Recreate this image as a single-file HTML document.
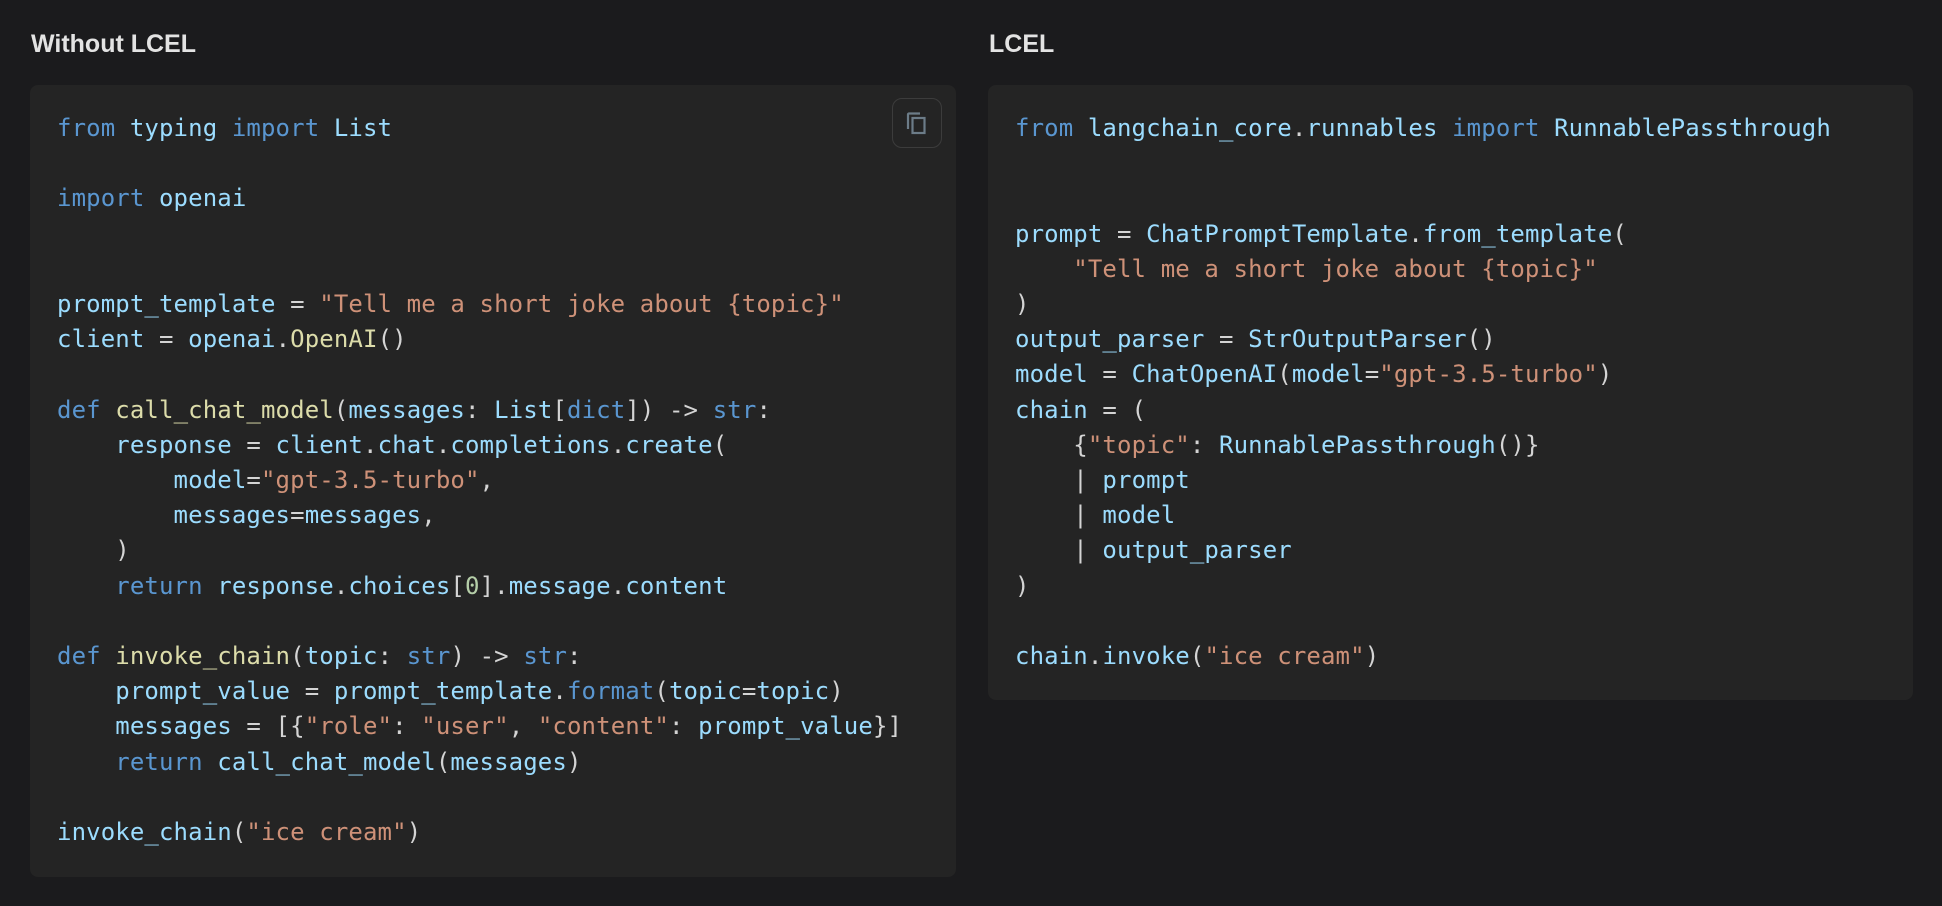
<!DOCTYPE html>
<html><head><meta charset="utf-8"><style>
html,body{margin:0;padding:0;background:#1b1b1d;width:1942px;height:906px;overflow:hidden}
h3{position:absolute;margin:0;font:bold 25px "Liberation Sans",sans-serif;color:#e3e3e3;top:30px}
.card{position:absolute;top:85px;background:#242424;border-radius:8px;box-sizing:border-box;padding:26px 0 0 27px}
pre{margin:0;font:24px/35.2px "DejaVu Sans Mono","Liberation Mono",monospace;color:#9cdcfe;letter-spacing:0.12px}
.k{color:#5a96d0}.s{color:#ce9178}.f{color:#dcdcaa}.n{color:#b5cea8}.p{color:#d4d4d4}
.copy{position:absolute;left:862px;top:13px;width:50px;height:50px;box-sizing:border-box;border:1px solid #3c3c3c;border-radius:10px}
</style></head><body>
<h3 style="left:31px">Without LCEL</h3>
<h3 style="left:989px">LCEL</h3>
<div class="card" style="left:30px;width:926px;height:792px">
<div class="copy"><svg width="50" height="50" viewBox="0 0 50 50" style="position:absolute;left:-1px;top:-1px"><path d="M16 31V16.5a1 1 0 0 1 1-1h11" fill="none" stroke="#6c7c88" stroke-width="2.2"/><rect x="20.5" y="20" width="12" height="15" fill="none" stroke="#6c7c88" stroke-width="2.2"/></svg></div>
<pre><span class="k">from</span> typing <span class="k">import</span> List

<span class="k">import</span> openai


prompt_template <span class="p">=</span> <span class="s">"Tell me a short joke about {topic}"</span>
client <span class="p">=</span> openai<span class="p">.</span><span class="f">OpenAI</span><span class="p">()</span>

<span class="k">def</span> <span class="f">call_chat_model</span><span class="p">(</span>messages<span class="p">:</span> List<span class="p">[</span><span class="k">dict</span><span class="p">]) -&gt;</span> <span class="k">str</span><span class="p">:</span>
    response <span class="p">=</span> client<span class="p">.</span>chat<span class="p">.</span>completions<span class="p">.</span>create<span class="p">(</span>
        model<span class="p">=</span><span class="s">"gpt-3.5-turbo"</span><span class="p">,</span>
        messages<span class="p">=</span>messages<span class="p">,</span>
    <span class="p">)</span>
    <span class="k">return</span> response<span class="p">.</span>choices<span class="p">[</span><span class="n">0</span><span class="p">].</span>message<span class="p">.</span>content

<span class="k">def</span> <span class="f">invoke_chain</span><span class="p">(</span>topic<span class="p">:</span> <span class="k">str</span><span class="p">) -&gt;</span> <span class="k">str</span><span class="p">:</span>
    prompt_value <span class="p">=</span> prompt_template<span class="p">.</span><span class="k">format</span><span class="p">(</span>topic<span class="p">=</span>topic<span class="p">)</span>
    messages <span class="p">= [{</span><span class="s">"role"</span><span class="p">:</span> <span class="s">"user"</span><span class="p">,</span> <span class="s">"content"</span><span class="p">:</span> prompt_value<span class="p">}]</span>
    <span class="k">return</span> call_chat_model<span class="p">(</span>messages<span class="p">)</span>

invoke_chain<span class="p">(</span><span class="s">"ice cream"</span><span class="p">)</span></pre>
</div>
<div class="card" style="left:988px;width:925px;height:615px">
<pre><span class="k">from</span> langchain_core<span class="p">.</span>runnables <span class="k">import</span> RunnablePassthrough


prompt <span class="p">=</span> ChatPromptTemplate<span class="p">.</span>from_template<span class="p">(</span>
    <span class="s">"Tell me a short joke about {topic}"</span>
<span class="p">)</span>
output_parser <span class="p">=</span> StrOutputParser<span class="p">()</span>
model <span class="p">=</span> ChatOpenAI<span class="p">(</span>model<span class="p">=</span><span class="s">"gpt-3.5-turbo"</span><span class="p">)</span>
chain <span class="p">= (</span>
    <span class="p">{</span><span class="s">"topic"</span><span class="p">:</span> RunnablePassthrough<span class="p">()}</span>
    <span class="p">|</span> prompt
    <span class="p">|</span> model
    <span class="p">|</span> output_parser
<span class="p">)</span>

chain<span class="p">.</span>invoke<span class="p">(</span><span class="s">"ice cream"</span><span class="p">)</span></pre>
</div>
</body></html>
